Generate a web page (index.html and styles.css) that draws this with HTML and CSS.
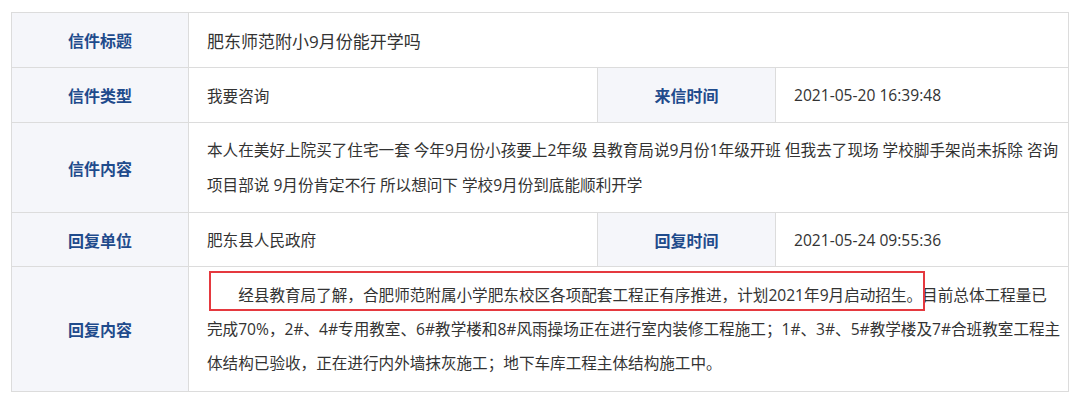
FILE: index.html
```html
<!DOCTYPE html>
<html lang="zh-CN">
<head>
<meta charset="utf-8">
<title>信件详情</title>
<link rel="stylesheet" href="styles.css">
</head>
<body>
<div class="letter">
  <div class="cell label r1">信件标题</div>
  <div class="cell value title r1 span3">肥东师范附小9月份能开学吗</div>

  <div class="cell label r2">信件类型</div>
  <div class="cell value r2">我要咨询</div>
  <div class="cell label r2">来信时间</div>
  <div class="cell value r2">2021-05-20 16:39:48</div>

  <div class="cell label r3">信件内容</div>
  <div class="cell value r3 span3 para">本人在美好上院买了住宅一套 今年9月份小孩要上2年级 县教育局说9月份1年级开班 但我去了现场 学校脚手架尚未拆除 咨询项目部说 9月份肯定不行 所以想问下 学校9月份到底能顺利开学</div>

  <div class="cell label r4">回复单位</div>
  <div class="cell value r4">肥东县人民政府</div>
  <div class="cell label r4">回复时间</div>
  <div class="cell value r4">2021-05-24 09:55:36</div>

  <div class="cell label r5">回复内容</div>
  <div class="cell value r5 span3 para reply">
    <p class="reply-text">经县教育局了解，合肥师范附属小学肥东校区各项配套工程正有序推进，计划2021年9月启动招生。目前总体工程量已完成70%，2#、4#专用教室、6#教学楼和8#风雨操场正在进行室内装修工程施工；1#、3#、5#教学楼及7#合班教室工程主体结构已验收，正在进行内外墙抹灰施工；地下车库工程主体结构施工中。</p>
    <span class="highlight" aria-hidden="true"></span>
  </div>
</div>
</body>
</html>
```

FILE: styles.css
```css
* {
  box-sizing: border-box;
}

html, body {
  margin: 0;
  padding: 0;
  background: #ffffff;
}

body {
  font-family: "Open Sans", "Noto Sans CJK SC", sans-serif;
  font-size: 15.6px;
  color: #333333;
}

.letter {
  margin: 12px 0 0 11px;
  width: 1058px;
  display: grid;
  grid-template-columns: 177px 409px 178px 293px;
  grid-template-rows: 55px 55px 90px 54px 125px;
  border-top: 1px solid #dcdcdc;
  border-left: 1px solid #dcdcdc;
}

.cell {
  border-right: 1px solid #dcdcdc;
  border-bottom: 1px solid #dcdcdc;
  display: flex;
  align-items: center;
}

.label {
  justify-content: center;
  background: #f5f6fa;
  color: #1f4b8c;
  font-weight: bold;
  font-size: 16px;
}

.value {
  padding: 0 6px 0 18px;
  background: #ffffff;
}

.title {
  font-size: 17px;
}

.span3 {
  grid-column: span 3;
}

.para {
  line-height: 35px;
}

.reply {
  position: relative;
  line-height: 34px;
}

.reply-text {
  margin: 0;
  text-indent: 2em;
}

.highlight {
  position: absolute;
  left: 20px;
  top: 4px;
  width: 716px;
  height: 40px;
  border: 2px solid #e5393f;
  pointer-events: none;
}
```
